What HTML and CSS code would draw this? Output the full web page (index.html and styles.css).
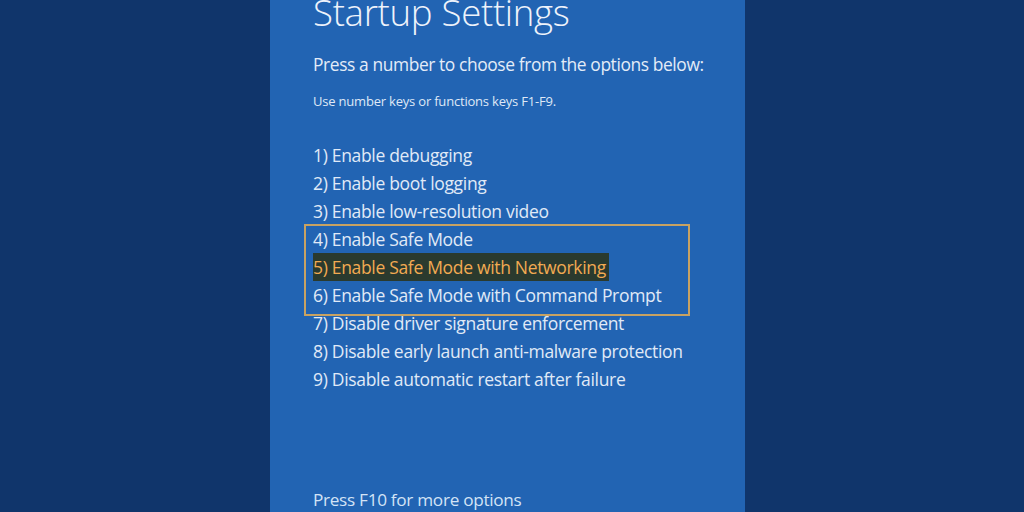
FILE: index.html
```html
<!DOCTYPE html>
<html lang="en">
<head>
<meta charset="utf-8">
<title>Startup Settings</title>
<link rel="stylesheet" href="styles.css">
</head>
<body>
<div class="stage">
  <main class="panel">
    <h1 class="title">Startup Settings</h1>
    <p class="lead">Press a number to choose from the options below:</p>
    <p class="hint">Use number keys or functions keys F1-F9.</p>
    <ol class="options">
      <li class="opt">1) Enable debugging</li>
      <li class="opt">2) Enable boot logging</li>
      <li class="opt">3) Enable low-resolution video</li>
      <li class="group">
        <ol class="group-list">
          <li class="opt">4) Enable Safe Mode</li>
          <li class="opt"><span class="selected">5) Enable Safe Mode with Networking</span></li>
          <li class="opt">6) Enable Safe Mode with Command Prompt</li>
        </ol>
      </li>
      <li class="opt">7) Disable driver signature enforcement</li>
      <li class="opt">8) Disable early launch anti-malware protection</li>
      <li class="opt">9) Disable automatic restart after failure</li>
    </ol>
    <p class="footer">Press F10 for more options</p>
  </main>
</div>
</body>
</html>
```
FILE: styles.css
```css
html, body {
  margin: 0;
  padding: 0;
}
body {
  background: #10356b;
  width: 1024px;
  height: 512px;
  overflow: hidden;
  font-family: "Open Sans", "Noto Sans", sans-serif;
  color: #e6eef9;
}
.stage {
  display: flex;
  height: 512px;
  padding-left: 270px;
}
.panel {
  width: 475px;
  height: 512px;
  background: #2264b3;
  box-sizing: border-box;
  padding-left: 43px;
  display: flex;
  flex-direction: column;
}
.title {
  margin: -12px 0 0 0;
  font-size: 36.6px;
  font-weight: 300;
  line-height: 48px;
  letter-spacing: -0.3px;
  color: #eef3fb;
}
.lead {
  margin: 16px 0 0 0;
  font-size: 17.4px;
  line-height: 24px;
  letter-spacing: -0.4px;
  color: #e4ecf8;
}
.hint {
  margin: 17px 0 0 0;
  font-size: 13px;
  line-height: 16px;
  letter-spacing: -0.2px;
  color: #dfe8f6;
}
.options {
  list-style: none;
  margin: 32px 0 0 0;
  padding: 0;
}
.opt {
  font-size: 17.5px;
  line-height: 28px;
  height: 28px;
  letter-spacing: -0.32px;
  color: #e0eaf7;
  white-space: nowrap;
}
.group {
  position: relative;
}
.group::before {
  content: "";
  position: absolute;
  top: -1px;
  left: -9px;
  width: 386px;
  height: 92px;
  border: 2px solid #c8a262;
  box-sizing: border-box;
  pointer-events: none;
}
.group-list {
  list-style: none;
  margin: 0;
  padding: 0;
}
.selected {
  display: inline-block;
  height: 28px;
  background: #2a3a2e;
  color: #f2aa52;
  padding-right: 3px;
}
.footer {
  margin: auto 0 0 0;
  font-size: 17.2px;
  line-height: 24px;
  height: 24px;
  letter-spacing: -0.3px;
  color: #d3e3f6;
}
```
